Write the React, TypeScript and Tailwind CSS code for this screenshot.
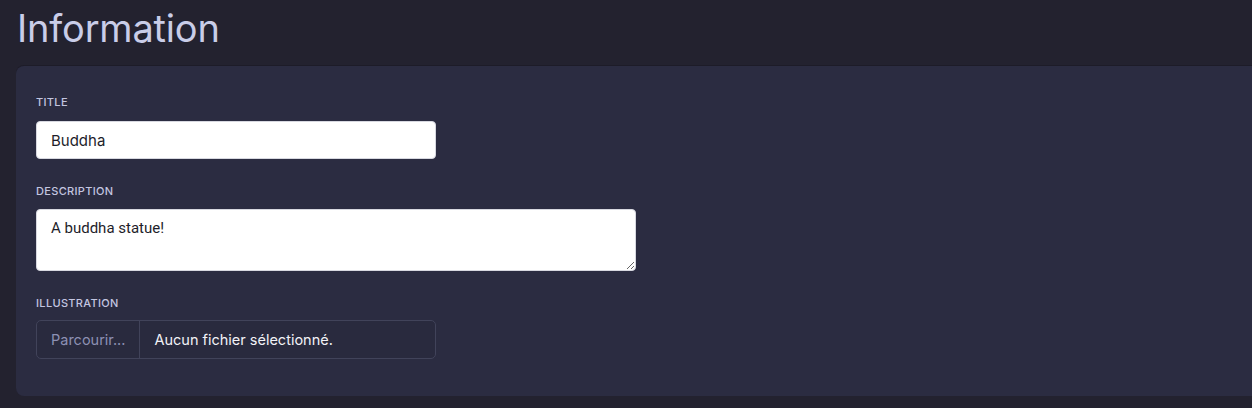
export default function App() {
  return (
    <div
      className="min-h-[408px] bg-[#23222f] px-4 pt-1 pb-3"
      style={{ fontFamily: "Inter, 'Noto Sans', sans-serif" }}
    >
      <h1 className="text-[38px] leading-[48px] font-normal text-[#c9cde8] ml-px mb-[14px] tracking-[-0.005em]">
        Information
      </h1>

      <div className="-mr-8 rounded-lg bg-[#2b2c41] px-5 pt-7 pb-[37px] shadow-[0_-1px_0_#1d1c28]">
        <label className="block text-[11px] leading-4 font-medium uppercase tracking-[0.03em] text-[#c3c6e0]">
          Title
        </label>
        <input
          type="text"
          defaultValue="Buddha"
          className="mt-[11px] block h-[38px] w-[400px] rounded-[4px] border border-[#d7d8e0] bg-white px-[14px] text-[15px] text-[#1e1e2a] outline-none"
        />

        <label className="mt-6 block text-[11px] leading-4 font-medium uppercase tracking-[0.03em] text-[#c3c6e0]">
          Description
        </label>
        <textarea
          defaultValue="A buddha statue!"
          className="mt-[10px] block h-[62px] w-[600px] rounded-[4px] border border-[#d7d8e0] bg-white px-[14px] py-[8px] text-[15px] leading-[20px] text-[#1e1e2a] outline-none"
          style={{ fontFamily: "Roboto, sans-serif" }}
        />

        <label className="mt-6 block text-[11px] leading-4 font-medium uppercase tracking-[0.03em] text-[#c3c6e0]">
          Illustration
        </label>
        <div className="mt-[9px] flex h-[39px] w-[400px] items-stretch overflow-hidden rounded-[5px] border border-[#41435a] bg-[#292a3e] text-[14.5px]">
          <span className="flex items-center border-r border-[#41435a] px-[14px] text-[#8d90b3]">
            Parcourir...
          </span>
          <span className="flex items-center px-[14px] text-[#f2f2f7]">
            Aucun fichier sélectionné.
          </span>
        </div>
      </div>
    </div>
  );
}
